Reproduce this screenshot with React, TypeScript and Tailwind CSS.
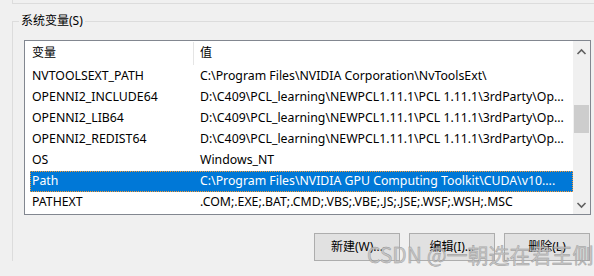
import React from "react";

const rows: [string, string][] = [
  ["NVTOOLSEXT_PATH", "C:\\Program Files\\NVIDIA Corporation\\NvToolsExt\\"],
  ["OPENNI2_INCLUDE64", "D:\\C409\\PCL_learning\\NEWPCL1.11.1\\PCL 1.11.1\\3rdParty\\Op..."],
  ["OPENNI2_LIB64", "D:\\C409\\PCL_learning\\NEWPCL1.11.1\\PCL 1.11.1\\3rdParty\\Op..."],
  ["OPENNI2_REDIST64", "D:\\C409\\PCL_learning\\NEWPCL1.11.1\\PCL 1.11.1\\3rdParty\\Op..."],
  ["OS", "Windows_NT"],
  ["Path", "C:\\Program Files\\NVIDIA GPU Computing Toolkit\\CUDA\\v10...."],
  ["PATHEXT", ".COM;.EXE;.BAT;.CMD;.VBS;.VBE;.JS;.JSE;.WSF;.WSH;.MSC"],
];

const font = { fontFamily: '"Noto Sans", "Noto Sans CJK SC", sans-serif' };

export default function App() {
  return (
    <div
      className="relative w-[594px] h-[276px] overflow-hidden bg-[#f0f0f0] text-[12px] text-black"
      style={font}
    >
      <div className="ml-[12px] h-[4px] border-l border-b border-[#dcdcdc]" />
      <div className="relative mt-[17px] ml-[12px] border-l border-t border-[#dcdcdc] pt-[18px] pl-[11px]">
        <div className="absolute left-[6px] top-[-10px] bg-[#f0f0f0] px-[2px] leading-[18px]">
          系统变量(S)
        </div>
        <div className="flex w-[567px] h-[175px] border border-[#828790] bg-white">
          <div className="flex-1 flex flex-col">
            <div className="flex h-[25px]">
              <div className="w-[168px] pl-[7px] pt-[4px] leading-[16px]">变量</div>
              <div className="w-px mt-[1px] h-[23px] bg-[#e5e5e5]" />
              <div className="pl-[6px] pt-[4px] leading-[16px]">值</div>
            </div>
            {rows.map(([k, v]) => {
              const sel = k === "Path";
              return (
                <div
                  key={k}
                  className={
                    "ml-[5px] flex h-[21px] items-center whitespace-nowrap text-[12.3px] " +
                    (sel
                      ? "bg-[#0078d7] text-white outline outline-1 outline-dotted outline-offset-[-1px] outline-[#ff9a2e]"
                      : "")
                  }
                >
                  <div className="w-[170px] pl-[2px]">{k}</div>
                  <div>{v}</div>
                </div>
              );
            })}
          </div>
          <div className="w-[17px] flex flex-col items-center bg-[#f0f0f0]">
            <svg width="17" height="17" viewBox="0 0 17 17" className="mt-[2px]">
              <path d="M4.5 11 L8.5 7 L12.5 11" fill="none" stroke="#606060" strokeWidth="1.6" />
            </svg>
            <div className="mt-[45px] w-[15px] h-[28px] bg-[#cdcdcd]" />
            <div className="flex-1" />
            <svg width="17" height="17" viewBox="0 0 17 17" className="mb-[1px]">
              <path d="M4.5 7 L8.5 11 L12.5 7" fill="none" stroke="#606060" strokeWidth="1.6" />
            </svg>
          </div>
        </div>
        <div className="flex justify-end gap-[9px] w-[566px] mt-[18px]">
          {["新建(W)...", "编辑(I)...", "删除(L)"].map((t) => (
            <div
              key={t}
              className="w-[86px] h-[28px] flex items-center justify-center border border-[#adadad] bg-[#e1e1e1]"
            >
              {t}
            </div>
          ))}
        </div>
      </div>
      <div
        className="absolute left-[367px] top-[242px] text-[21px] leading-[25px] text-[#c4c4c4] opacity-90 whitespace-nowrap"
        style={{ fontFamily: '"Noto Sans CJK SC", sans-serif', WebkitTextStroke: "0.4px #8f8f8f" }}
      >
        CSDN @一朝选在君王侧
      </div>
    </div>
  );
}
